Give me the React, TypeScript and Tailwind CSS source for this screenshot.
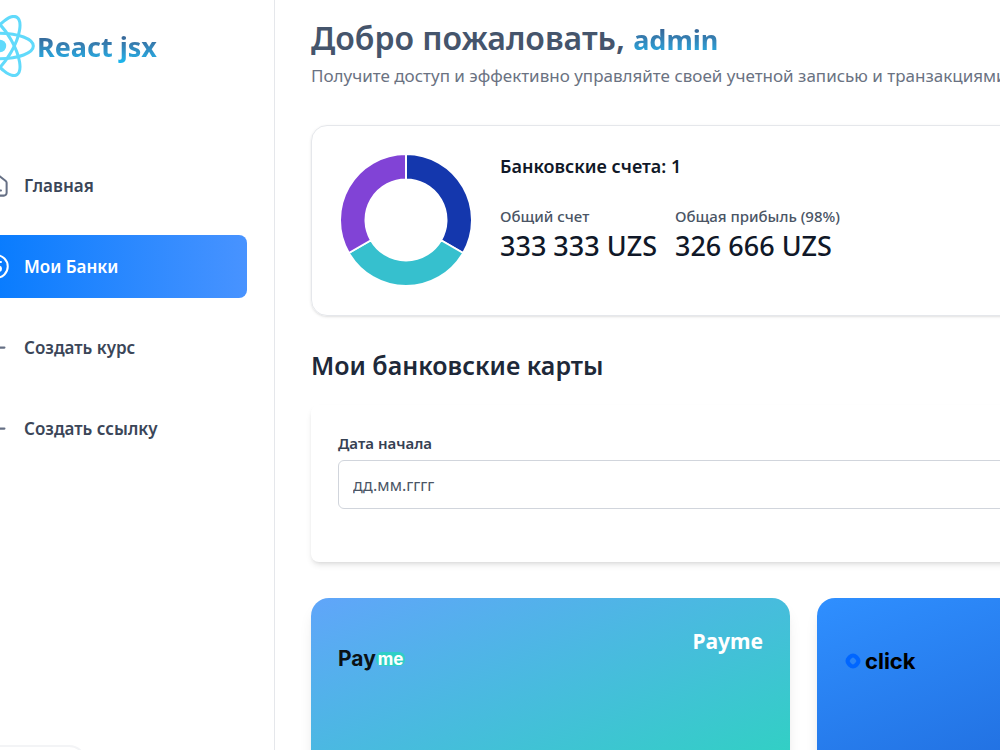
import type { ReactNode } from 'react';
import { CircleDollarSign, Plus } from 'lucide-react';

interface NavItem {
  label: string;
  icon: ReactNode;
  active?: boolean;
}

function HomeIcon() {
  return (
    <svg width="27" height="27" viewBox="0 0 24 24" fill="none" stroke="currentColor" strokeWidth="1.8" strokeLinecap="round" strokeLinejoin="round">
      <path d="M3 9.6c0-.6.3-1.2.8-1.6L10.7 2.5a2 2 0 0 1 2.6 0l6.9 5.5c.5.4.8 1 .8 1.6V18.5a2.5 2.5 0 0 1-2.5 2.5h-13A2.5 2.5 0 0 1 3 18.5z" />
      <path d="M9 16.5h7" />
    </svg>
  );
}

function ReactLogo() {
  return (
    <svg width="70" height="62" viewBox="-11.5 -10.23 23 20.46" className="shrink-0">
      <circle r="2.05" fill="#61dafb" />
      <g fill="none" stroke="#61dafb">
        <ellipse rx="11" ry="4.2" />
        <ellipse rx="11" ry="4.2" transform="rotate(60)" />
        <ellipse rx="11" ry="4.2" transform="rotate(120)" />
      </g>
    </svg>
  );
}

function DoughnutChart() {
  // three equal 120° slices
  return (
    <svg width="132" height="132" viewBox="-66 -66 132 132" className="shrink-0">
      <g stroke="#fff" strokeWidth="2">
        <path fill="#1437ad" d="M0 -66A66 66 0 0 1 57.16 33L35.07 20.25A40.5 40.5 0 0 0 0 -40.5Z" />
        <path fill="#36c0ce" d="M57.16 33A66 66 0 0 1 -57.16 33L-35.07 20.25A40.5 40.5 0 0 0 35.07 20.25Z" />
        <path fill="#8143d6" d="M-57.16 33A66 66 0 0 1 0 -66L0 -40.5A40.5 40.5 0 0 0 -35.07 20.25Z" />
      </g>
    </svg>
  );
}

const navItems: NavItem[] = [
  { label: 'Главная', icon: <HomeIcon /> },
  { label: 'Мои Банки', icon: <CircleDollarSign size={27} strokeWidth={1.8} />, active: true },
  { label: 'Создать курс', icon: <Plus size={27} /> },
  { label: 'Создать ссылку', icon: <Plus size={27} /> },
];

function Sidebar() {
  return (
    <aside className="flex w-[275px] shrink-0 flex-col overflow-hidden border-r border-gray-200 pt-[15px] pr-[27px]">
      <div className="-ml-[35px] flex flex-1 flex-col">
        <a href="#" className="mb-[77px] flex items-center gap-0.5">
          <ReactLogo />
          <span className="bg-linear-to-b from-[#35507f] to-[#16b8f0] bg-clip-text pt-0.5 text-[27px] leading-8 font-bold text-transparent">
            React jsx
          </span>
        </a>

        <nav className="flex flex-col gap-[18px]">
          {navItems.map((item) => (
            <a
              key={item.label}
              href="#"
              className={
                item.active
                  ? 'flex h-[63px] items-center gap-3.5 rounded-lg bg-linear-to-r/srgb from-[#0179fe] to-[#4893ff] px-[18px] text-[17px] font-semibold text-white'
                  : 'flex h-[63px] items-center gap-3.5 rounded-lg px-[18px] text-[17px] font-semibold text-[#3b4658]'
              }
            >
              <span className={item.active ? 'text-white' : 'text-[#667085]'}>{item.icon}</span>
              {item.label}
            </a>
          ))}
        </nav>

        <div className="mt-auto -mb-9 h-[41px] w-[122px] rounded-[18px] border-2 border-gray-100" />
      </div>
    </aside>
  );
}

function TotalBalance() {
  return (
    <section className="flex items-start gap-7 rounded-2xl border border-gray-200 p-7 pb-[29px] shadow-sm">
      <DoughnutChart />
      <div>
        <h2 className="text-[18px] leading-6 font-semibold text-gray-900">Банковские счета: 1</h2>
        <div className="mt-7 flex gap-[18px]">
          <div>
            <p className="text-[15px] leading-5 font-medium text-gray-600">Общий счет</p>
            <p className="text-[27px] leading-10 font-medium text-gray-900">333 333 UZS</p>
          </div>
          <div>
            <p className="text-[15px] leading-5 font-medium text-gray-600">Общая прибыль (98%)</p>
            <p className="text-[27px] leading-10 font-medium text-gray-900">326 666 UZS</p>
          </div>
        </div>
      </div>
    </section>
  );
}

function PaymeLogo() {
  return (
    <span className="flex items-center font-[Inter,sans-serif]">
      <span className="text-[21px] leading-6 font-bold text-[#0b1215]">Pay</span>
      <span className="rounded-md bg-[#2fcfc6] px-0.5 text-[17px] leading-[14px] font-bold text-white">me</span>
    </span>
  );
}

function ClickLogo() {
  return (
    <span className="flex items-center gap-[3px] font-[Inter,sans-serif]">
      <svg width="18" height="18" viewBox="0 0 18 18">
        <rect x="4" y="4" width="10" height="10" rx="4" fill="none" stroke="#0066ff" strokeWidth="4.2" transform="rotate(45 9 9)" />
      </svg>
      <span className="text-[22px] leading-7 font-bold text-black">click</span>
    </span>
  );
}

export default function App() {
  return (
    <div className="flex h-screen overflow-hidden bg-white font-['Noto_Sans','Open_Sans',sans-serif]">
      <Sidebar />

      <main className="min-w-0 flex-1 overflow-hidden pt-[15px] pl-9">
        <div className="-mr-12">
          {/* Header */}
          <header className="mb-9 whitespace-nowrap">
            <h1 className="text-[32px] leading-[46px] font-semibold text-slate-600">
              Добро пожаловать,{' '}
              <span className="bg-linear-to-b from-[#35507f] to-[#16b8f0] bg-clip-text text-[27px] font-bold text-transparent">
                admin
              </span>
            </h1>
            <p className="text-[17px] leading-[26px] text-gray-500">
              Получите доступ и эффективно управляйте своей учетной записью и транзакциями
            </p>
          </header>

          <TotalBalance />

          {/* Date filter */}
          <h2 className="mt-[31px] text-[25px] leading-9 font-semibold text-gray-800">Мои банковские карты</h2>
          <form className="mt-[22px] rounded-lg px-[27px] pt-[26px] pb-[53px] shadow-md">
            <label htmlFor="start-date" className="block text-[15px] leading-6 font-semibold text-gray-700">
              Дата начала
            </label>
            <input
              id="start-date"
              type="text"
              placeholder="дд.мм.гггг"
              className="mt-[5px] block h-[49px] w-full rounded-md border border-gray-300 px-3.5 text-[16px] placeholder:text-gray-600"
            />
          </form>

          {/* Cards */}
          <div className="mt-9 flex gap-[27px]">
            <article className="flex h-[190px] w-[479px] shrink-0 justify-between rounded-[18px] bg-linear-to-br/srgb from-[#60a5fa] to-[#2dd4bf] p-[27px] shadow-lg">
              <div className="pt-[22px]">
                <PaymeLogo />
              </div>
              <h3 className="text-[21px] leading-8 font-bold text-white">Payme</h3>
            </article>
            <article className="flex h-[190px] w-[479px] shrink-0 rounded-[18px] bg-linear-to-br/srgb from-[#2f8fff] to-[#1a5fd0] p-[27px] shadow-lg">
              <div className="pt-[22px]">
                <ClickLogo />
              </div>
            </article>
          </div>
        </div>
      </main>
    </div>
  );
}
